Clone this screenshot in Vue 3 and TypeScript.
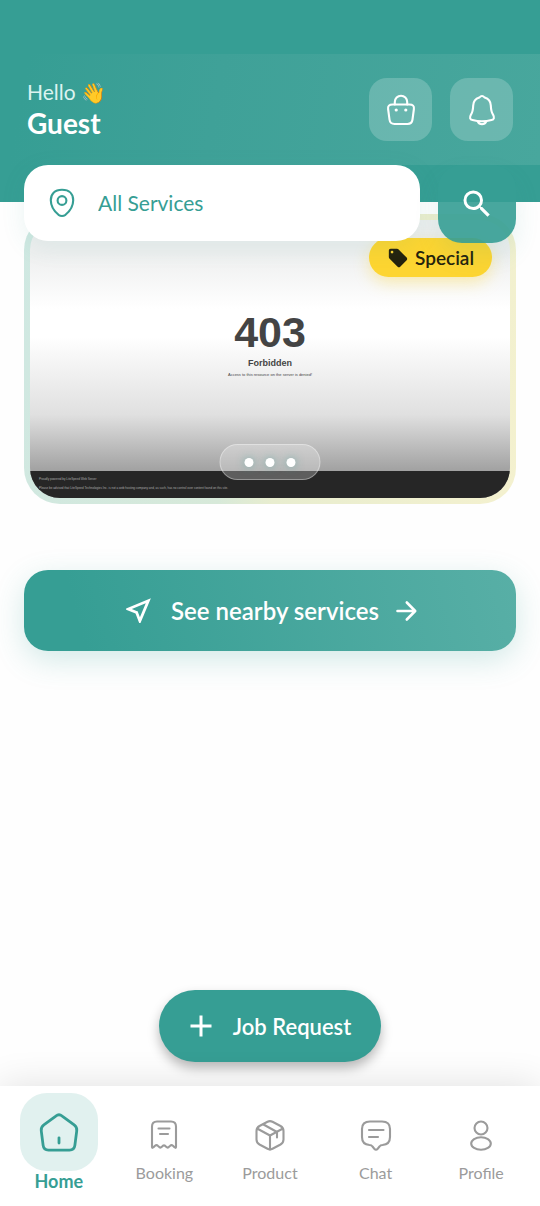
<script setup lang="ts">
import { ref } from 'vue'

interface Tab {
  id: string
  label: string
  paths: string[]
}

const service = ref('All Services')
const active = ref('home')

const tabs: Tab[] = [
  {
    id: 'home',
    label: 'Home',
    paths: [
      'M15.3 4.3Q18 2.2 20.7 4.3L31 11.9Q33.6 13.8 33.2 17L31.6 29.5Q31.1 33.5 27 33.5H9Q4.900 33.5 4.400 29.5L2.800 17Q2.400 13.800 5 11.900Z',
      'M18 23V27.500',
    ],
  },
  {
    id: 'booking',
    label: 'Booking',
    paths: [
      'M6 30V9.500Q6 4.500 11 4.500H25Q30 4.500 30 9.500V30Q30 31.500 28.500 30.300L27 28.800Q25.500 27.500 24.200 28.800L22.500 30.300Q21.300 31 20.200 29.800Q18 27 15.800 29.800Q14.700 31 13.500 30.300L11.800 28.800Q10.500 27.500 9 28.800L7.500 30.300Q6 31.500 6 30Z',
      'M12.500 11.500H23.500',
      'M14 17H22',
    ],
  },
  {
    id: 'product',
    label: 'Product',
    paths: [
      'M15.500 4.800Q18 3.500 20.500 4.800L28.500 9Q31.500 10.700 31.500 14V22.500Q31.500 25.800 28.500 27.500L20.500 31.700Q18 33 15.500 31.700L7.500 27.500Q4.500 25.800 4.500 22.500V14Q4.500 10.700 7.500 9Z',
      'M5.500 11.800L18 18.500L30.500 11.800',
      'M18 18.500V32.500',
      'M11.500 7.500L25 15V20.500',
    ],
  },
  {
    id: 'chat',
    label: 'Chat',
    paths: [
      'M12 4.500H24Q32 4.500 32 12V20Q32 27.500 24.500 28Q22.500 28 21.500 29.500L19.800 31.700Q18 33.500 16.200 31.700L14.500 29.500Q13.500 28 11.500 28Q4 27.500 4 20V12Q4 4.500 12 4.500Z',
      'M11 13H25.500',
      'M11 20H20',
    ],
  },
  {
    id: 'profile',
    label: 'Profile',
    paths: [
      'M18 4.500A6.500 6.500 0 1 1 18 17.500A6.500 6.500 0 1 1 18 4.500Z',
      'M18 20.200A9.800 6.300 0 1 1 18 32.800A9.800 6.300 0 1 1 18 20.200Z',
    ],
  },
]
</script>

<template>
  <div class="page">
    <header class="header">
      <div class="bar">
        <div class="greeting">
          <p class="hello">Hello <span class="wave">👋</span></p>
          <h1 class="name">Guest</h1>
        </div>
        <div class="actions">
          <button class="action" type="button" aria-label="Cart">
            <svg class="icon" viewBox="0 0 36 36">
              <path d="M9.500 12.500H26.500Q31.500 12.500 30.900 17L29.500 27.500Q29 32 24.500 32H11.500Q7 32 6.500 27.500L5.100 17Q4.500 12.500 9.500 12.500Z" />
              <path d="M11.800 12.500V10A6.200 6.200 0 0 1 24.200 10V12.500" />
              <circle class="dot-fill" cx="13.200" cy="18" r="1.600" />
              <circle class="dot-fill" cx="22.800" cy="18" r="1.600" />
            </svg>
          </button>
          <button class="action" type="button" aria-label="Notifications">
            <svg class="icon" viewBox="0 0 36 36">
              <path d="M15.300 5.600Q18 2.500 20.700 5.600C24.500 6.800 26.600 9.800 26.800 13.500C27 18.500 27.200 20 29 22.600Q31.500 27.200 27.500 28.100Q18 30.500 8.500 28.100Q4.500 27.200 7 22.600C8.800 20 9 18.500 9.200 13.500C9.400 9.800 11.500 6.800 15.300 5.600Z" />
              <path d="M13.800 29.500Q15 32.200 18 32.200T22.200 29.500" />
            </svg>
          </button>
        </div>
      </div>
      <div class="hero">
        <form class="search" @submit.prevent>
          <label class="field">
            <svg class="icon" viewBox="0 0 36 36">
              <path d="M18 4.800C25.500 4.800 29.200 9 29.200 15.200C29.200 20.500 26 26 21.500 29.800Q18 32.200 14.500 29.800C10 26 6.800 20.500 6.800 15.200C6.800 9 10.500 4.800 18 4.800Z" />
              <circle cx="18" cy="15.500" r="4.400" />
            </svg>
            <input v-model="service" class="input" type="text" aria-label="Service" />
          </label>
          <button class="go" type="submit" aria-label="Search">
            <svg class="solid" viewBox="0 0 24 24">
              <path d="M15.500 14h-.79l-.28-.27A6.471 6.471 0 0 0 16 9.500 6.500 6.500 0 1 0 9.500 16c1.610 0 3.090-.59 4.230-1.570l.27.28v.79l5 4.990L20.490 19l-4.990-5zm-6 0C7.010 14 5 11.990 5 9.500S7.010 5 9.500 5 14 7.010 14 9.500 11.990 14 9.500 14z" />
            </svg>
          </button>
        </form>
      </div>
    </header>

    <main class="main">
      <section class="banner" aria-label="Special offers">
        <div class="slide">
          <div class="error">
            <p class="code">403</p>
            <p class="title">Forbidden</p>
            <p class="reason">Access to this resource on the server is denied!</p>
          </div>
          <div class="server">
            <p>Proudly powered by LiteSpeed Web Server</p>
            <p>Please be advised that LiteSpeed Technologies Inc. is not a web hosting company and, as such, has no control over content found on this site.</p>
          </div>
          <div class="chip">
            <svg class="tag" viewBox="0 0 24 24">
              <path d="M21.410 11.580l-9-9C12.050 2.220 11.550 2 11 2H4c-1.100 0-2 .9-2 2v7c0 .55.22 1.050.59 1.420l9 9c.36.36.86.58 1.410.58.55 0 1.050-.22 1.410-.59l7-7c.37-.36.59-.86.59-1.410 0-.55-.23-1.060-.59-1.420zM5.500 7C4.670 7 4 6.330 4 5.500S4.670 4 5.500 4 7 4.670 7 5.500 6.330 7 5.500 7z" />
            </svg>
            <span>Special</span>
          </div>
          <div class="pager"><i /><i /><i /></div>
        </div>
      </section>

      <button class="nearby" type="button">
        <svg class="near" viewBox="0 0 24 24">
          <path d="M21 3L3 10.530v.98l6.840 2.650L12.480 21h.98L21 3zM17.270 6.730l-4.240 10.130-1.320-3.420-.32-.83-.82-.32-3.430-1.330 10.130-4.230z" />
        </svg>
        <span>See nearby services</span>
        <svg class="arrow" viewBox="0 0 24 24">
          <path d="M3.500 12H21M12.800 3.500L21.200 12L12.800 20.500" />
        </svg>
      </button>

      <button class="job" type="button">
        <svg class="solid" viewBox="0 0 24 24"><path d="M19 13h-6v6h-2v-6H5v-2h6V5h2v6h6v2z" /></svg>
        <span>Job Request</span>
      </button>
    </main>

    <nav class="nav">
      <button
        v-for="tab in tabs"
        :key="tab.id"
        type="button"
        class="tab"
        :class="{ active: tab.id === active }"
        @click="active = tab.id"
      >
        <span class="badge">
          <svg class="icon" viewBox="0 0 36 36"><path v-for="d in tab.paths" :key="d" :d="d" /></svg>
        </span>
        <span class="label">{{ tab.label }}</span>
      </button>
    </nav>
  </div>
</template>

<style>
body {
  margin: 0;
  background: #fefefe;
}
</style>

<style scoped>
.page {
  display: flex;
  flex-direction: column;
  min-height: 100vh;
  font-family: Lato, "Liberation Sans", sans-serif;
  color: #fff;
}

p,
h1 {
  margin: 0;
}

button {
  border: 0;
  padding: 0;
  font: inherit;
  color: inherit;
  cursor: pointer;
}

.icon {
  width: 36px;
  height: 36px;
  flex: none;
  fill: none;
  stroke: currentColor;
  stroke-width: 2.1;
  stroke-linecap: round;
  stroke-linejoin: round;
}

.dot-fill {
  fill: currentColor;
  stroke: none;
}

.solid {
  width: 36px;
  height: 36px;
  fill: currentColor;
}

.header {
  position: relative;
  z-index: 2;
  padding-top: 54px;
  background: #369e94;
}

.bar {
  display: flex;
  align-items: center;
  justify-content: space-between;
  padding: 24px 27px;
  background: linear-gradient(100deg, #369e94 5%, #3fa198 40%, #48a79d);
}

.hello {
  font-size: 21px;
  line-height: 26px;
  color: #dcf3f0;
}

.wave {
  font-family: "Noto Color Emoji", Lato, sans-serif;
  font-size: 20px;
  line-height: 20px;
}

.name {
  font-size: 28px;
  line-height: 36px;
  font-weight: 700;
}

.actions {
  display: flex;
  gap: 18px;
}

.action {
  display: grid;
  place-items: center;
  width: 63px;
  height: 63px;
  border-radius: 18px;
  background: rgba(255, 255, 255, 0.2);
}

.hero {
  height: 37px;
}

.search {
  display: flex;
  align-items: flex-start;
  gap: 18px;
  padding: 0 24px;
}

.field {
  display: flex;
  flex: 1;
  align-items: center;
  gap: 18px;
  box-sizing: border-box;
  min-width: 0;
  height: 76px;
  padding: 0 20px;
  border-radius: 24px;
  background: #fff;
  color: #369e94;
  box-shadow: 0 6px 24px rgba(54, 158, 148, 0.1);
}

.input {
  flex: 1;
  min-width: 0;
  height: 26px;
  border: 0;
  outline: 0;
  padding: 0;
  background: none;
  font: inherit;
  font-size: 21px;
  line-height: 26px;
  color: inherit;
}

.go {
  display: grid;
  place-items: center;
  width: 78px;
  height: 78px;
  border-radius: 24px;
  background: rgba(54, 158, 148, 0.91);
  box-shadow: 0 12px 24px rgba(54, 158, 148, 0.12);
}

.main {
  display: flex;
  flex: 1;
  flex-direction: column;
  padding: 12px 24px 24px;
}

.banner {
  padding: 6px;
  border-radius: 36px;
  background: linear-gradient(100deg, #cfe8e2, #d7e9d9 45%, #e8edcf 55%, #f4f1cf);
}

.slide {
  position: relative;
  display: flex;
  flex-direction: column;
  height: 278px;
  overflow: hidden;
  border-radius: 30px;
  background: linear-gradient(#eeefef, #eeefef 12%, #fff 32%, #fff 42%, #e0e0e0 70%, #a2a2a2 90%);
}

.error {
  flex: 1;
  padding-top: 88px;
  text-align: center;
  font-family: "Liberation Sans", Arial, sans-serif;
  color: #444;
}

.code {
  font-size: 43px;
  line-height: 48px;
  font-weight: 700;
}

.title {
  font-size: 9px;
  line-height: 14px;
  font-weight: 700;
}

.reason {
  font-size: 4px;
  line-height: 10px;
}

.server {
  height: 27px;
  box-sizing: border-box;
  padding: 4px 9px;
  background: #262626;
  font-family: "Liberation Sans", Arial, sans-serif;
  font-size: 3px;
  line-height: 9px;
  color: #aaa;
}

.chip {
  position: absolute;
  top: 18px;
  right: 18px;
  display: flex;
  align-items: center;
  gap: 6px;
  height: 39px;
  padding: 0 18px;
  border-radius: 20px;
  background: #fdd531;
  box-shadow: 0 6px 15px rgba(253, 213, 49, 0.35);
  font-size: 19px;
  font-weight: 600;
  color: #24220d;
}

.tag {
  width: 22px;
  height: 22px;
  fill: currentColor;
}

.pager {
  position: absolute;
  left: 50%;
  bottom: 18px;
  display: flex;
  align-items: center;
  gap: 12px;
  height: 34px;
  padding: 0 24px;
  transform: translateX(-50%);
  border: 1px solid rgba(255, 255, 255, 0.35);
  border-radius: 18px;
  background: rgba(255, 255, 255, 0.26);
}

.pager i {
  width: 9px;
  height: 9px;
  border-radius: 50%;
  background: #fff;
  box-shadow: 0 0 9px rgba(54, 158, 148, 0.5);
}

.nearby {
  display: flex;
  align-items: center;
  justify-content: center;
  height: 81px;
  margin-top: 66px;
  border-radius: 24px;
  background: linear-gradient(75deg, #369e94 12%, #58afa6);
  box-shadow: 0 9px 30px rgba(54, 158, 148, 0.22);
  font-size: 24px;
  font-weight: 600;
}

.near {
  width: 33px;
  height: 33px;
  margin-right: 16px;
  fill: currentColor;
}

.arrow {
  width: 24px;
  height: 24px;
  margin-left: 15px;
  fill: none;
  stroke: currentColor;
  stroke-width: 2.6;
  stroke-linecap: round;
  stroke-linejoin: round;
}

.job {
  display: flex;
  align-items: center;
  align-self: center;
  gap: 14px;
  height: 72px;
  margin-top: auto;
  padding: 0 30px 0 24px;
  border-radius: 36px;
  background: #369e94;
  box-shadow: 0 6px 12px rgba(0, 0, 0, 0.28);
  font-size: 22px;
  font-weight: 600;
}

.nav {
  position: relative;
  display: grid;
  grid-template-columns: repeat(5, 1fr);
  height: 120px;
  box-sizing: border-box;
  padding: 7px 6px 0;
  background: #fff;
  box-shadow: 0 0 36px rgba(0, 0, 0, 0.12);
}

.tab {
  display: flex;
  flex-direction: column;
  align-items: center;
  align-self: start;
  padding-top: 24px;
  background: none;
  font-size: 16px;
  color: #9b9b9b;
}

.badge {
  display: grid;
  place-items: center;
  height: 36px;
}

.label {
  margin-top: 10px;
  line-height: 20px;
}

.tab.active {
  padding-top: 0;
  font-size: 18px;
  font-weight: 700;
  color: #369e94;
}

.active .badge {
  width: 78px;
  height: 78px;
  border-radius: 27px;
  background: #e1f1ef;
}

.active .icon {
  width: 42px;
  height: 42px;
  stroke-width: 2.4;
}

.active .label {
  margin-top: 0;
}
</style>
